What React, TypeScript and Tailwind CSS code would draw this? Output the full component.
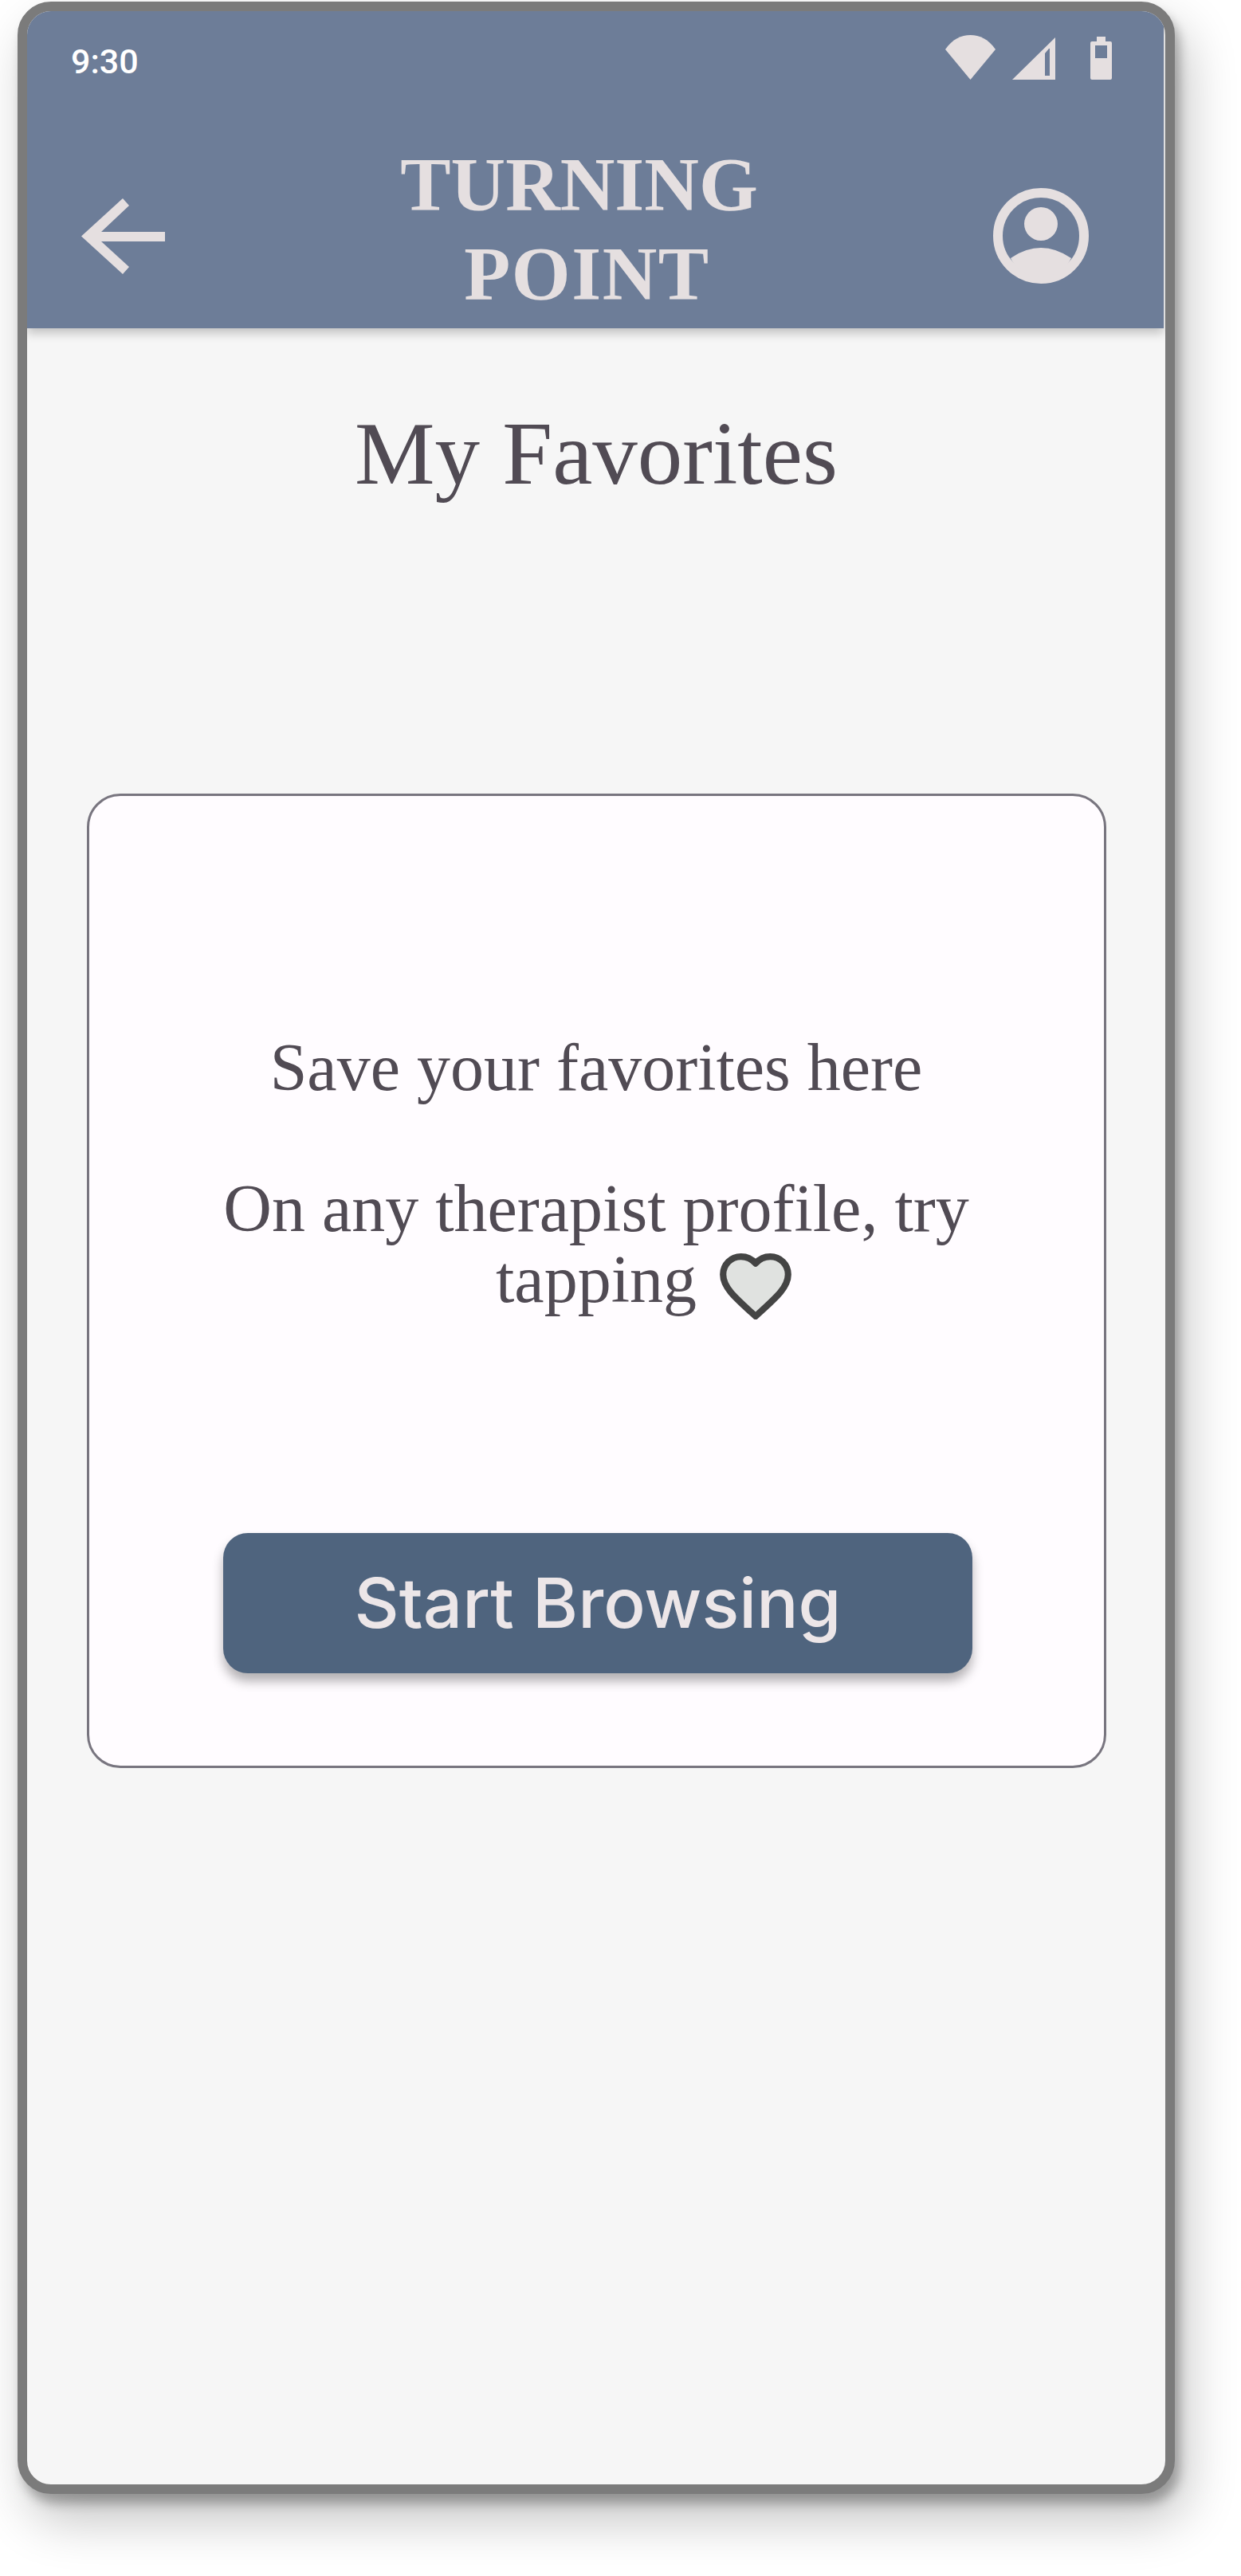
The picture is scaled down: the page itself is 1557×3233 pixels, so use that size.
import React from 'react';

const WifiIcon = () => (
  <svg width="63" height="56" viewBox="0 0 63 56" className="block">
    <path d="M0 18 C9 5 20 0 31.5 0 C43 0 54 5 63 18 L31.5 56 Z" fill="#e5dfe0" />
  </svg>
);

const SignalIcon = () => (
  <svg width="54" height="53" viewBox="0 0 54 53" className="block">
    <path fillRule="evenodd" d="M54 0 V53 H0 Z M46 14 L41 20 V48 H47 V14 Z" fill="#e5dfe0" />
  </svg>
);

const BatteryIcon = () => (
  <svg width="27" height="54" viewBox="0 0 27 54" className="block">
    <path
      fillRule="evenodd"
      d="M8 0 H19 V6 H25 Q27 6 27 8 V52 Q27 54 25 54 H2 Q0 54 0 52 V8 Q0 6 2 6 H8 Z M6 11 V27 H21 V11 Z"
      fill="#e5dfe0"
    />
  </svg>
);

const BackArrow = () => (
  <svg width="105" height="95" viewBox="0 0 105 95" className="block">
    <path d="M105 42 H25 L60 9 L52 0 L0 47.5 L52 95 L60 86 L25 54 H105 Z" fill="#e5dfe0" />
  </svg>
);

const ProfileIcon = () => (
  <svg width="120" height="120" viewBox="0 0 120 120" className="block">
    <circle cx="60" cy="60" r="54" fill="none" stroke="#e5dfe0" strokeWidth="12" />
    <circle cx="60" cy="45" r="21" fill="#e5dfe0" />
    <path d="M22 88 Q60 62 98 88 A42 42 0 0 1 22 88 Z" fill="#e5dfe0" />
  </svg>
);

const HeartIcon = () => (
  <svg width="90" height="83" viewBox="1 2 22 20.35" className="block">
    <path
      d="M16.5 3c-1.74 0-3.41.81-4.5 2.09C10.91 3.81 9.24 3 7.5 3 4.42 3 2 5.42 2 8.5c0 3.78 3.4 6.86 8.55 11.54L12 21.35l1.45-1.32C18.6 15.36 22 12.28 22 8.5 22 5.42 19.58 3 16.5 3z"
      fill="#e0e2e0"
      stroke="#444444"
      strokeWidth="2"
      strokeLinejoin="round"
    />
  </svg>
);

export default function App() {
  return (
    <div className="w-full h-[3233px] bg-white pt-[2px] pl-[22px]">
      <div className="w-[1452px] h-[3128px] border-[12px] border-[#7b7b7b] rounded-[42px] bg-[#f6f6f6] overflow-hidden shadow-[6px_12px_14px_rgba(0,0,0,0.28),14px_32px_64px_rgba(0,0,0,0.24)]">
        {/* Header */}
        <header className="h-[398px] mr-[2px] bg-[#6d7d98] shadow-[0_6px_12px_rgba(0,0,0,0.22)] relative">
          <div className="flex items-start justify-between pt-[30px] pl-[55px] pr-[65px]">
            <span className="mt-[5px] text-[43px] leading-[56px] font-medium text-white font-['Roboto',sans-serif]">9:30</span>
            <div className="flex items-end">
              <WifiIcon />
              <div className="ml-[21px]"><SignalIcon /></div>
              <div className="ml-[44px]"><BatteryIcon /></div>
            </div>
          </div>
          <div className="flex items-center pl-[68px] pr-[94px] mt-[87px]">
            <BackArrow />
            <h1 className="flex-1 text-center text-[95px] leading-[112px] font-bold text-[#e5dfe0] font-['Liberation_Serif',serif] -mt-[16px]">
              TURNING
              <br />
              <span className="pl-[20px] tracking-[1.5px]">POINT</span>
            </h1>
            <ProfileIcon />
          </div>
        </header>

        <main className="flex flex-col items-center">
          <h2 className="mt-[92px] text-[113px] leading-[130px] text-[#514b54] font-['Liberation_Serif',serif]">My Favorites</h2>

          {/* Empty state card */}
          <div className="mt-[362px] w-[1279px] h-[1223px] border-[3px] border-[#78757f] rounded-[42px] bg-[#fffcff] flex flex-col items-center pt-[297px]">
            <p className="text-center text-[84px] leading-[88.5px] text-[#514b54] font-['Liberation_Serif',serif]">
              Save your favorites here
              <br />
              <br />
              On any therapist profile, try
              <br />
              <span className="relative">
                tapping
                <span className="absolute left-full ml-[29px] top-[14px]"><HeartIcon /></span>
              </span>
            </p>
            <button className="mt-[274px] ml-[4px] w-[940px] h-[176px] rounded-[31px] bg-[#4f647e] text-[#ece6e8] text-[87px] font-medium font-['Inter',sans-serif] shadow-[0_10px_14px_rgba(0,0,0,0.3)]">
              Start Browsing
            </button>
          </div>
        </main>
      </div>
    </div>
  );
}
